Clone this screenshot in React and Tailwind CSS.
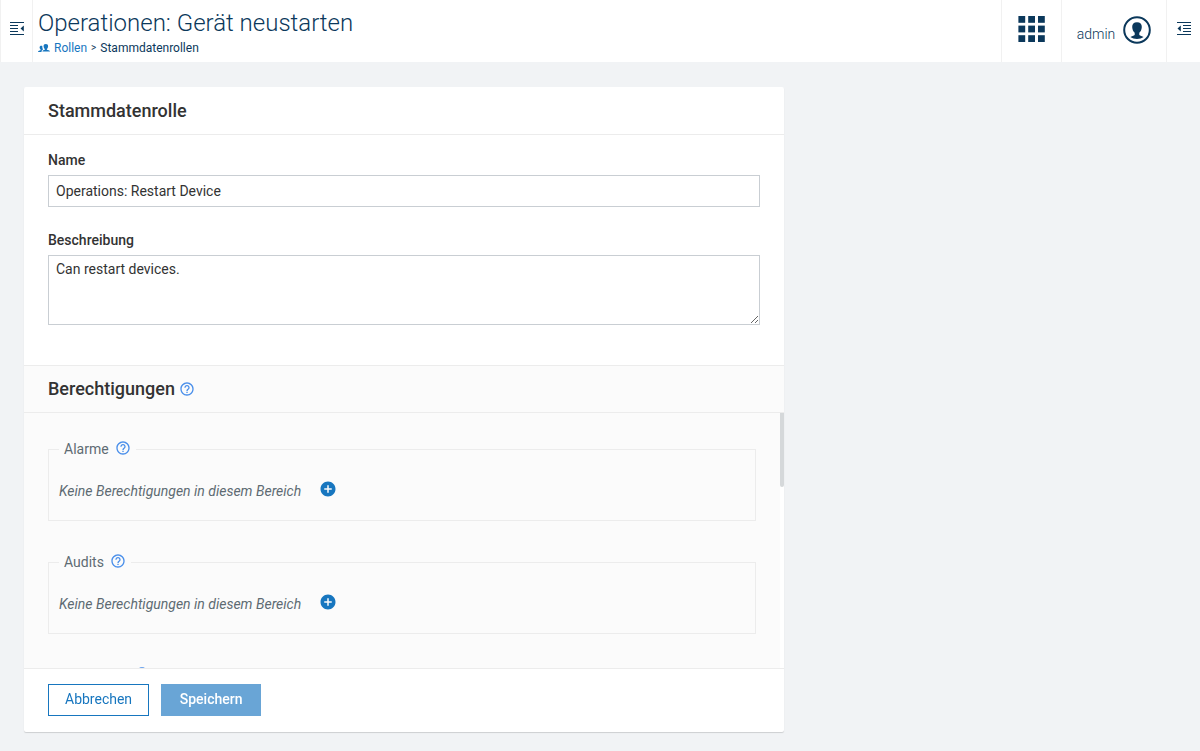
import React from "react";
import { MdHelpOutline, MdAddCircle } from "react-icons/md";

const groups = ["Alarme", "Audits", "Ereignisse"];

function CollapseIcon() {
  return (
    <svg width="16" height="16" viewBox="0 0 16 16" fill="#0b385b" shapeRendering="crispEdges">
      <rect x="1" y="1" width="14" height="1" />
      <rect x="1" y="4" width="8" height="1" />
      <rect x="1" y="7" width="8" height="1" />
      <rect x="1" y="10" width="8" height="1" />
      <rect x="1" y="13" width="14" height="1" />
      <path d="M14.800 4.500v6L11.500 7.500z" shapeRendering="auto" />
    </svg>
  );
}

function DrawerIcon() {
  return (
    <svg width="16" height="16" viewBox="0 0 16 16" fill="#0b385b" shapeRendering="crispEdges">
      <rect x="1" y="1" width="14" height="1" />
      <rect x="7" y="4" width="8" height="1" />
      <rect x="7" y="7" width="8" height="1" />
      <rect x="7" y="10" width="8" height="1" />
      <rect x="1" y="13" width="14" height="1" />
      <path d="M4.800 4.500v6L1.500 7.500z" shapeRendering="auto" />
    </svg>
  );
}

function GridIcon() {
  return (
    <svg width="28" height="28" viewBox="0 0 28 28" fill="#0b385b">
      {[1, 10.6, 20.2].map((y) => [0.4, 10.2, 20].map((x) => <rect key={`${x}-${y}`} x={x} y={y} width="6.800" height="6.800" />))}
    </svg>
  );
}

function UserIcon() {
  return (
    <svg width="28" height="28" viewBox="0 0 28 28" fill="#0b385b">
      <circle cx="14" cy="14" r="12.8" fill="none" stroke="#0b385b" strokeWidth="2" />
      <path d="M14 6.200c-3.200 0-4.900 2-4.800 4.700.1 2.600 1.100 4.600 2.500 5.800v2.200c-.8.9-3 1.100-4.300 2 1.800 1.300 4 2 6.600 2s4.800-.7 6.600-2c-1.300-.9-3.500-1.100-4.300-2v-2.200c1.400-1.200 2.400-3.200 2.500-5.800.1-2.700-1.600-4.700-4.800-4.700z" />
    </svg>
  );
}

function RolesIcon() {
  return (
    <svg width="12" height="9" viewBox="0 0 12 9" fill="#1776bf">
      <path d="M7.800 0c-1.500 0-2.300.9-2.200 2.200 0 1.100.5 2.100 1.200 2.700v.9C6 6.200 4.400 6.300 4.400 7.500H12c0-1.200-2.200-1.300-3.100-1.700v-.9c.7-.6 1.200-1.600 1.200-2.700C10.100.9 9.300 0 7.800 0z" />
      <path d="M3.300 1.700c-1.100 0-1.700.7-1.700 1.700 0 .8.3 1.500.9 1.900v1C1.600 6.700 0 6.700 0 8h3.500c0-1.400.8-2 1.600-2.400-.5-.7-.8-1.600-.8-2.500V2c-.3-.2-.6-.3-1-.3z" />
    </svg>
  );
}

function Help({ topic }) {
  return (
    <button type="button" aria-label={`Hilfe: ${topic}`} className="flex text-[#4a8fea]">
      <MdHelpOutline size={16} />
    </button>
  );
}

function PermissionGroup({ name }) {
  return (
    <fieldset className="mb-[35px] h-[78px] border border-[#ececec] px-2.5 pb-5">
      <legend className="flex h-3 items-center gap-1.5 px-[5px] text-[#5e6b73]">
        {name}
        <span className="pb-[3px]">
          <Help topic={name} />
        </span>
      </legend>
      <div className="flex items-center gap-[18px] pt-[25px]">
        <em>Keine Berechtigungen in diesem Bereich</em>
        <button type="button" aria-label={`${name}: Berechtigung hinzufügen`} className="mb-1 flex text-[#1776bf]">
          <MdAddCircle size={18} />
        </button>
      </div>
    </fieldset>
  );
}

export default function App() {
  return (
    <div className="flex min-h-screen flex-col bg-[#f1f3f5] font-[Roboto,sans-serif] text-sm leading-5 text-[#333]">
      <header className="flex h-[62px] bg-white text-[#0b385b]">
        <button type="button" aria-label="Navigation" className="flex w-[33px] items-center justify-center border-x border-[#f1f1f1] pb-1">
          <CollapseIcon />
        </button>
        <div className="min-w-0 flex-1 px-[5px] pt-2">
          <h1 className="text-2xl leading-[30px] font-light">Operationen: Gerät neustarten</h1>
          <nav aria-label="Brotkrumen" className="flex items-center gap-1 text-xs leading-5">
            <RolesIcon />
            <a href="#rollen" className="text-[#1776bf]">Rollen</a>
            <span className="text-[10px]">&gt;</span>
            <span>Stammdatenrollen</span>
          </nav>
        </div>
        <button type="button" aria-label="Anwendungen" className="flex w-[60px] items-center justify-center border-l border-[#f1f1f1] pb-1">
          <GridIcon />
        </button>
        <button type="button" className="flex w-[105px] items-center justify-center gap-2 border-l border-[#f1f1f1] pb-[3px] font-light">
          <span className="pt-2">admin</span>
          <UserIcon />
        </button>
        <button type="button" aria-label="Seitenleiste" className="flex w-[34px] items-center justify-center border-l border-[#f1f1f1] pb-1">
          <DrawerIcon />
        </button>
      </header>
      <main className="p-6 pt-[25px]">
        <form className="max-w-[760px] rounded-xs bg-white shadow-[0_1px_1px_rgba(0,0,0,0.15)]">
          <h2 className="border-b border-[#ececec] px-6 py-3 text-lg leading-[23px] font-medium">Stammdatenrolle</h2>
          <div className="px-6 pt-[15px] pb-10">
            <label htmlFor="name" className="mb-[5px] block font-medium">Name</label>
            <input id="name" defaultValue="Operations: Restart Device" className="mb-[23px] block h-8 w-full border border-[#c9ced3] px-[7px]" />
            <label htmlFor="description" className="mb-[5px] block font-medium">Beschreibung</label>
            <textarea id="description" defaultValue="Can restart devices." className="block h-[70px] w-full resize-y border border-[#c9ced3] px-[7px] py-[3px]" />
          </div>
          <div className="flex items-center gap-1 border-y border-[#ececec] bg-[#fbfbfb] px-6 py-[11px]">
            <h2 className="text-lg leading-6 font-medium">Berechtigungen</h2>
            <Help topic="Berechtigungen" />
          </div>
          <div className="flex h-[255px]">
            <div className="h-full min-w-0 flex-1 overflow-y-auto bg-[#fbfbfb] px-6 pt-[30px] text-[#5e6b73] [scrollbar-width:none]">
              {groups.map((name) => (
                <PermissionGroup key={name} name={name} />
              ))}
            </div>
            <div className="w-1 bg-white">
              <div className="h-[74px] rounded-b-xs bg-[#d5d8da]" />
            </div>
          </div>
          <div className="flex gap-3 border-t border-[#ececec] px-6 pt-[15px] pb-4">
            <button type="button" className="h-8 border border-[#1776bf] px-4 pb-0.5 text-[#1776bf]">Abbrechen</button>
            <button type="submit" disabled className="h-8 min-w-[100px] bg-[#69a5d6] px-4 pb-0.5 font-medium text-white">Speichern</button>
          </div>
        </form>
      </main>
    </div>
  );
}
